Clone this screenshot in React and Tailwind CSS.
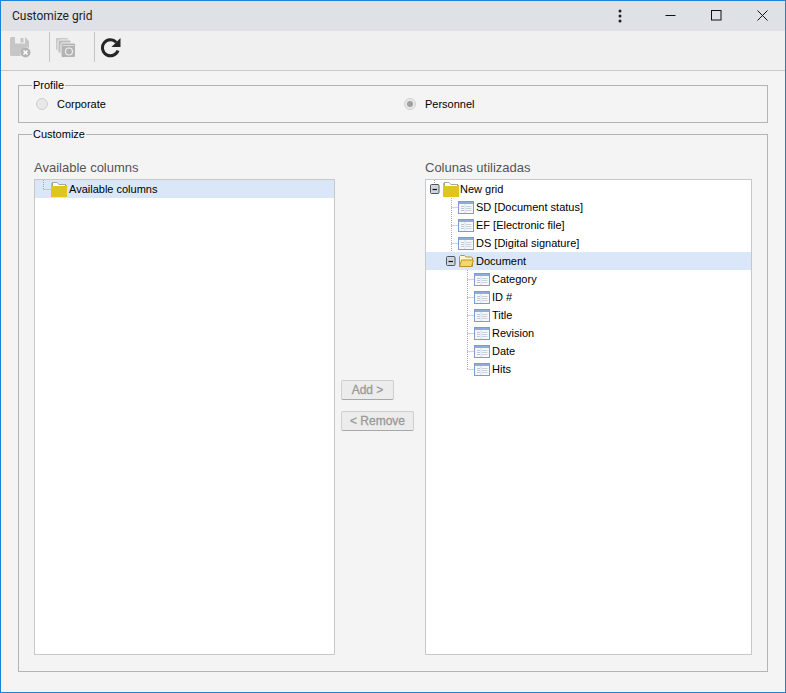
import { useState } from 'react';

const level1 = ['SD [Document status]', 'EF [Electronic file]', 'DS [Digital signature]'];
const level2 = ['Category', 'ID #', 'Title', 'Revision', 'Date', 'Hits'];

function Folder({ open }) {
  if (open) {
    return (
      <svg width="16" height="14" viewBox="0 0 16 14" className="shrink-0">
        <path d="M1.5 12.5V2.5l1-1h4l1.5 1.5h5.5l1 1v8.5z" fill="#fff6d0" stroke="#b8962a" />
        <path d="M1.5 12.5l2-6.5h12l-2 6.5z" fill="#f5d76a" stroke="#b8962a" />
      </svg>
    );
  }
  return (
    <svg width="16" height="16" viewBox="0 0 16 16" className="shrink-0">
      <path d="M0 2h6l2 2h8v12H0z" fill="#dcc21f" />
      <path d="M1 1h5l2 2h7v2H1z" fill="#a8a8a0" />
      <path d="M2 2h4l2 2h6v1H2z" fill="#fff" />
      <path d="M0 5h16v11H0z" fill="#e0c520" />
    </svg>
  );
}

function ColumnIcon() {
  return (
    <svg width="16" height="13" viewBox="0 0 16 13" className="shrink-0">
      <rect x="0.5" y="0.5" width="15" height="12" fill="#f4f7fc" stroke="#7f9bcf" />
      <rect x="1" y="1" width="14" height="2" fill="#8fabdc" />
      <path d="M3 5.5h3M3 7.5h3M3 9.5h3" stroke="#c2c8d2" />
      <path d="M8 5.5h5.5M8 7.5h5.5M8 9.5h5.5" stroke="#ccd1d9" />
      <path d="M7 3v9" stroke="#d2dcee" />
    </svg>
  );
}

function Expander({ stem }) {
  return (
    <svg width="11" height="18" viewBox="0 0 11 18" className="shrink-0">
      {stem && <path d="M4.5 0v4" stroke="#a8a8a8" strokeDasharray="1 1" />}
      <rect x="0.5" y="4.5" width="8.5" height="9" rx="1" fill="#cfd5dc" stroke="#4c5660" />
      <path d="M2.5 9.5h4.5" stroke="#111" strokeWidth="1.2" />
    </svg>
  );
}

// dotted tree guide, x is where the vertical runs, w is the total width
function Guide({ x, w, last }) {
  return (
    <svg width={w} height="18" viewBox={`0 0 ${w} 18`} className="shrink-0">
      <path d={`M${x + 0.5} 0V${last ? 9 : 18}M${x + 0.5} 9.5H${w}`} stroke="#a8a8a8" strokeDasharray="1 1" fill="none" />
    </svg>
  );
}

function Radio({ checked }) {
  return (
    <span className="flex h-[12px] w-[12px] shrink-0 items-center justify-center rounded-full border border-[#d0d0d0] bg-[#e8e8e8]">
      {checked && <span className="h-[6px] w-[6px] rounded-full bg-[#a0a0a0]" />}
    </span>
  );
}

function TreeRow({ children, selected, className = '' }) {
  return (
    <div className={`flex h-[18px] items-center text-[11px] leading-[18px] text-black ${selected ? 'bg-[#d9e7f8]' : ''} ${className}`}>
      {children}
    </div>
  );
}

function SaveIcon() {
  return (
    <svg width="21" height="21" viewBox="0 0 21 21">
      <path d="M0 1.5A1.5 1.5 0 0 1 1.5 0H15l4 4v7a6 6 0 0 0-8 8H1.5A1.5 1.5 0 0 1 0 17.5z" fill="#c6c6c6" />
      <rect x="5" y="0" width="10" height="6.5" fill="#f0f0f0" />
      <rect x="10.5" y="1" width="3" height="4.5" fill="#c6c6c6" />
      <circle cx="15.5" cy="15.5" r="5" fill="#b4b4b4" />
      <path d="M13.5 13.5l4 4M17.5 13.5l-4 4" stroke="#fff" strokeWidth="1.6" />
    </svg>
  );
}

function CopiesIcon() {
  return (
    <svg width="21" height="21" viewBox="0 0 21 21">
      <rect x="0.5" y="0.5" width="13" height="13" rx="1.5" fill="#c8c8c8" stroke="#f0f0f0" />
      <rect x="3" y="3" width="13" height="13" rx="1.5" fill="#bebebe" stroke="#f0f0f0" />
      <rect x="6" y="6" width="14.5" height="14.5" rx="1.5" fill="#b4b4b4" stroke="#f0f0f0" />
      <path d="M7.5 8.5h11.5" stroke="#dcdcdc" />
      <circle cx="14" cy="14.5" r="3.5" fill="none" stroke="#ececec" strokeWidth="1.2" />
    </svg>
  );
}

function RefreshIcon() {
  return (
    <svg width="21" height="21" viewBox="0 0 21 21">
      <path d="M16.2 5.2A8 8 0 1 0 18 13.5" fill="none" stroke="#262626" strokeWidth="3" />
      <path d="M20.5 1v9h-9z" fill="#262626" />
    </svg>
  );
}

export default function App() {
  const [profile] = useState('personnel');

  return (
    <div className="flex h-[693px] w-[786px] flex-col border border-[#1883d7] bg-[#f4f4f4] font-['Liberation_Sans',sans-serif]">
      <div className="flex h-[30px] shrink-0 items-center bg-[#dee1e6] pl-[11px]">
        <span className="font-['Roboto',sans-serif] text-[12px] text-[#222]">Customize grid</span>
        <div className="ml-auto flex h-full items-center pb-[1px]">
          <button className="flex h-full w-[54px] items-center justify-center">
            <svg width="4" height="14" viewBox="0 0 4 14"><circle cx="2" cy="2" r="1.5" fill="#222" /><circle cx="2" cy="7" r="1.5" fill="#222" /><circle cx="2" cy="12" r="1.5" fill="#222" /></svg>
          </button>
          <button className="flex h-full w-[46px] items-center justify-center">
            <svg width="11" height="11" viewBox="0 0 11 11"><path d="M0.5 5.5h10" stroke="#111" /></svg>
          </button>
          <button className="flex h-full w-[46px] items-center justify-center">
            <svg width="11" height="11" viewBox="0 0 11 11"><rect x="0.5" y="0.5" width="9.5" height="9.5" fill="none" stroke="#111" /></svg>
          </button>
          <button className="flex h-full w-[46px] items-center justify-center">
            <svg width="11" height="11" viewBox="0 0 11 11"><path d="M0.5 0.5l10 10M10.5 0.5l-10 10" stroke="#111" /></svg>
          </button>
        </div>
      </div>

      <div className="flex h-[40px] shrink-0 items-center border-b border-[#c9c9c9] bg-[#f0f0f0] pb-[7px] pl-[9px]">
        <SaveIcon />
        <span className="ml-[18px] h-[30px] w-px bg-[#c4c4c4]" />
        <span className="ml-[5px]"><CopiesIcon /></span>
        <span className="ml-[18px] h-[30px] w-px bg-[#c4c4c4]" />
        <span className="ml-[5px]"><RefreshIcon /></span>
      </div>

      <div className="flex flex-1 flex-col px-[17px] pt-[8px]">
        <fieldset className="border border-[#b4b4b4]">
          <legend className="ml-[13px] px-px text-[11px] leading-[13px] text-black">Profile</legend>
          <div className="flex h-[30px] items-center pb-[6px] pl-[17px] text-[11px] text-black">
            <div className="flex w-[368px] items-center gap-[9px]">
              <Radio checked={profile === 'corporate'} />
              <span>Corporate</span>
            </div>
            <div className="flex items-center gap-[9px]">
              <Radio checked={profile === 'personnel'} />
              <span>Personnel</span>
            </div>
          </div>
        </fieldset>

        <fieldset className="mt-[5px] border border-[#b4b4b4]">
          <legend className="ml-[13px] px-px text-[11px] leading-[13px] text-black">Customize</legend>
          <div className="flex h-[530px] px-[15px] pb-[16px] pt-[18px]">
            <div className="flex w-[301px] flex-col">
              <div className="h-[20px] text-[13px] leading-[18px] text-[#555]">Available columns</div>
              <div className="flex-1 border border-[#c8c8c8] bg-white">
                <TreeRow selected>
                  <Guide x={8} w={16} last />
                  <Folder />
                  <span className="ml-[2px]">Available columns</span>
                </TreeRow>
              </div>
            </div>

            <div className="flex w-[90px] flex-col items-start gap-[11px] pl-[6px] pt-[221px]">
              <button disabled className="h-[20px] w-[53px] rounded-[2px] border border-[#cfcfcf] border-b-[#a8a8a8] bg-[#ececec] text-[12px] [-webkit-text-stroke:0.3px_#999] text-[#999]">Add &gt;</button>
              <button disabled className="h-[20px] w-[73px] rounded-[2px] border border-[#cfcfcf] border-b-[#a8a8a8] bg-[#ececec] text-[12px] [-webkit-text-stroke:0.3px_#999] text-[#999]">&lt; Remove</button>
            </div>

            <div className="flex w-[327px] flex-col">
              <div className="h-[20px] text-[13px] leading-[18px] text-[#555]">Colunas utilizadas</div>
              <div className="flex-1 border border-[#c8c8c8] bg-white">
                <TreeRow className="pl-[4px]">
                  <Expander stem />
                  <span className="ml-[2px]"><Folder /></span>
                  <span className="ml-px">New grid</span>
                </TreeRow>
                {level1.map((name) => (
                  <TreeRow key={name}>
                    <Guide x={25} w={32} />
                    <ColumnIcon />
                    <span className="ml-[2px]">{name}</span>
                  </TreeRow>
                ))}
                <TreeRow selected className="pl-[20px]">
                  <Expander />
                  <span className="ml-px"><Folder open /></span>
                  <span className="ml-[2px]">Document</span>
                </TreeRow>
                {level2.map((name, i) => (
                  <TreeRow key={name}>
                    <Guide x={41} w={48} last={i === level2.length - 1} />
                    <ColumnIcon />
                    <span className="ml-[2px]">{name}</span>
                  </TreeRow>
                ))}
              </div>
            </div>
          </div>
        </fieldset>
      </div>
    </div>
  );
}
